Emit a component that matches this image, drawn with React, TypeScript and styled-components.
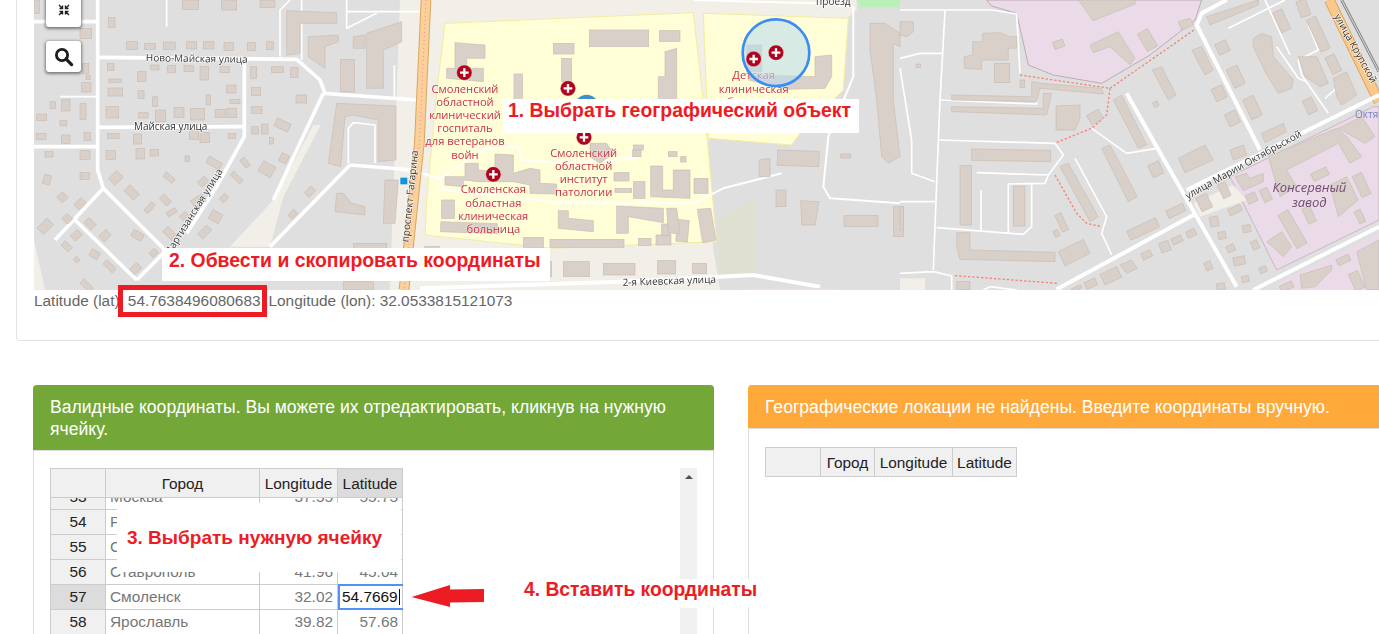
import React from "react";
import styled, { createGlobalStyle } from "styled-components";

type R = [number, number, number, number, number?];

const Global = createGlobalStyle`
  html, body { margin: 0; padding: 0; height: 100%; overflow: hidden; background: #fff; }
  body { font-family: "Liberation Sans", Arial, sans-serif; font-size: 15.4px; color: #555; }
`;

const Page = styled.div`
  position: relative;
  width: 1379px;
  height: 634px;
  overflow: hidden;
`;

const Well = styled.section`
  margin-left: 16px;
  width: 1500px;
  height: 341px;
  box-sizing: border-box;
  border-left: 1px solid #e3e3e3;
  border-bottom: 1px solid #e3e3e3;
  border-bottom-left-radius: 4px;
  padding-left: 17px;
`;

const MapFrame = styled.div`
  position: relative;
  width: 1345px;
  height: 290px;
  overflow: hidden;
  background: #e0dfdf;
`;

const MapSvg = styled.svg`
  display: block;
  width: 1345px;
  height: 290px;
  filter: blur(0.35px);
`;

const MapButton = styled.button<{ $top: number; $height: number }>`
  position: absolute;
  left: 12px;
  top: ${(p) => p.$top}px;
  width: 35px;
  height: ${(p) => p.$height}px;
  padding: 0;
  border: 0;
  border-radius: 3px;
  background: #fff;
  box-shadow: 0 1px 3px 1px rgba(0, 0, 0, 0.45);
  display: flex;
  align-items: center;
  justify-content: center;
`;

const CoordRow = styled.div`
  display: flex;
  height: 20px;
  margin-top: 1px;
  line-height: 20px;
  color: #666;
  font-size: 15.4px;
`;

const CoordValue = styled.span`
  position: relative;
  margin: 0 8px 0 4px;
  &::after {
    content: "";
    position: absolute;
    left: -10px;
    right: -6px;
    top: -6px;
    bottom: -6px;
    border: 5px solid #ed1c24;
  }
`;

const Panels = styled.div`
  display: flex;
  gap: 34px;
  margin: 44px 0 0 33px;
`;

const Panel = styled.section<{ $width: number }>`
  flex: none;
  width: ${(p) => p.$width}px;
  height: 400px;
  box-sizing: border-box;
  border: 1px solid #ddd;
  border-radius: 4px;
`;

const PanelHeading = styled.header<{ $color: string }>`
  margin: -1px -1px 0;
  padding: 11px 17px 10px;
  background: ${(p) => p.$color};
  color: #fff;
  font-size: 17.6px;
  line-height: 22px;
  border-radius: 4px 4px 0 0;
  border-bottom: 1px solid #ddd;
`;

const PanelBody = styled.div<{ $top: number }>`
  display: flex;
  justify-content: space-between;
  align-items: flex-start;
  padding: ${(p) => p.$top}px 16px 0;
`;

const Grid = styled.div<{ $cols: string }>`
  display: grid;
  grid-template-columns: ${(p) => p.$cols};
  border-left: 1px solid #ccc;
  border-top: 1px solid #ccc;
  box-sizing: border-box;
  font-size: 15.4px;
`;

const GridClip = styled.div`
  height: 200px;
  overflow: hidden;
`;

const HeadCell = styled.div<{ $active?: boolean }>`
  height: 28px;
  line-height: 29px;
  text-align: center;
  color: #222;
  white-space: nowrap;
  background: ${(p) => (p.$active ? "#dcdcdc" : "#f0f0f0")};
  border-right: 1px solid #ccc;
  border-bottom: 1px solid #ccc;
`;

const Rows = styled(Grid)`
  border-top: 0;
  margin-top: -13px;
`;

const RowHead = styled.div<{ $active?: boolean }>`
  height: 24px;
  line-height: 24px;
  text-align: center;
  color: #222;
  background: ${(p) => (p.$active ? "#dcdcdc" : "#f0f0f0")};
  border-right: 1px solid #ccc;
  border-bottom: 1px solid #ccc;
`;

const Cell = styled.div<{ $right?: boolean }>`
  height: 24px;
  line-height: 24px;
  padding: 0 4px;
  text-align: ${(p) => (p.$right ? "right" : "left")};
  color: #777;
  background: #fff;
  border-right: 1px solid #ccc;
  border-bottom: 1px solid #ccc;
  overflow: hidden;
  white-space: nowrap;
`;

const EditCell = styled(Cell)`
  position: relative;
  overflow: visible;
  color: #111;
  text-align: left;
  &::after {
    content: "";
    position: absolute;
    left: 0;
    top: -1px;
    right: -4px;
    bottom: -1px;
    border: 2px solid #5292f7;
  }
`;

const Caret = styled.span`
  display: inline-block;
  width: 1px;
  height: 16px;
  margin-left: 1px;
  background: #111;
  vertical-align: -3px;
`;

const ScrollTrack = styled.div`
  flex: none;
  width: 17px;
  height: 200px;
  background: #f1f1f1;
  display: flex;
  justify-content: center;
  padding-top: 7px;
  box-sizing: border-box;
`;

const ScrollArrow = styled.span`
  width: 0;
  height: 0;
  border-left: 4px solid transparent;
  border-right: 4px solid transparent;
  border-bottom: 4px solid #505050;
`;

const Note = styled.div<{ $x: number; $y: number; $w: number; $h: number; $pad: number; $line: number; $size: number }>`
  position: absolute;
  left: ${(p) => p.$x}px;
  top: ${(p) => p.$y}px;
  width: ${(p) => p.$w}px;
  height: ${(p) => p.$h}px;
  line-height: ${(p) => p.$line}px;
  padding-left: ${(p) => p.$pad}px;
  box-sizing: border-box;
  background: #fff;
  color: #ed1c24;
  font-size: ${(p) => p.$size}px;
  font-weight: 700;
  white-space: nowrap;
`;

const Arrow = styled.svg`
  position: absolute;
  left: 410px;
  top: 584px;
`;

const RedLabel = styled.text`
  font-family: "Open Sans", sans-serif;
  font-size: 33.5px;
  fill: #c9323d;
  text-anchor: middle;
  paint-order: stroke;
  stroke: rgba(255, 255, 255, 0.55);
  stroke-width: 3px;
`;

const StreetLabel = styled.text`
  font-family: "Open Sans", sans-serif;
  font-size: 30px;
  fill: #333;
  text-anchor: middle;
  paint-order: stroke;
  stroke: rgba(255, 255, 255, 0.8);
  stroke-width: 4px;
`;

const AreaLabel = styled.text`
  font-family: "Open Sans", sans-serif;
  font-size: 39px;
  font-style: italic;
  fill: #734a73;
  text-anchor: middle;
`;

const ReachLabel = styled.text`
  font-family: "Open Sans", sans-serif;
  font-size: 30px;
  fill: #6f7fc0;
`;

const BUILD = { fill: "#d9d0c9", stroke: "#c9bdb3", strokeWidth: 2 };

const rectsA: R[] = [
  [548,0,48,28],[665,0,45,30],[780,0,45,22],[102,0,16,40],[325,52,20,30],[380,125,32,24],[434,130,32,18],[490,126,36,22],[560,125,30,22],[610,125,32,22],[672,128,28,24],[742,128,24,24],[800,125,20,24],
  [322,190,20,22],[452,195,25,15],[502,197,25,20],[552,197,28,18],[600,200,26,40],[660,200,28,18],[752,200,18,35],[815,200,35,18],[872,203,22,30],
  [326,237,38,10],[324,264,44,24],[412,215,26,30],[414,272,18,24],[458,290,14,30],[618,285,14,30],[690,298,30,12],[680,255,28,24],[754,262,28,24],[754,320,32,20],[888,285,32,24],
  [318,320,38,34],[416,338,28,16],[466,330,30,35],[522,322,30,30],[572,325,42,35],[645,328,30,25],[680,325,30,28],
  [322,400,35,16],[400,402,25,30],[568,392,28,26],[600,398,28,30],[685,400,22,15],[755,380,20,22],[784,372,20,30],[808,412,12,20],[825,362,45,26,25],
  [318,452,28,26],[408,445,26,32],[450,448,26,20],[555,468,14,16],[240,452,30,26],[135,455,24,16],[240,518,28,20],
  [240,85,35,30],[248,190,18,30],[258,225,12,14],[245,248,28,28],[150,305,16,20],[185,298,25,35],[240,310,18,48],[110,342,30,20],[180,362,20,16],[108,400,30,18],[185,405,25,25],[252,398,20,24],
  [330,520,35,28,-45],[375,565,40,25,45],[490,525,35,16,40],[595,535,28,20,-45],[620,478,45,22,30],[720,480,30,16,50],[780,490,42,35,30],[690,525,40,15,45],[840,462,24,26,25],[916,565,28,20,-45],[866,634,25,18,-45],
  [130,525,22,28,15],[175,580,24,24,45],[225,600,30,22,-45],[190,645,24,22,45],[115,665,42,28,-45],[255,660,30,22,45],[300,695,30,24,-45],[395,695,35,22,30],[215,695,28,22,-45],[185,730,30,18,45],[270,752,28,22,30],[310,790,38,18,45],[222,772,16,14,45],[392,795,30,22,-45],[240,848,40,18,45],[480,590,32,20,45],[432,615,34,16,-50],[500,630,30,14,-30],[540,640,24,16,-45],[490,690,40,22,45],[595,685,38,22,-45],[630,635,34,30,30],[660,585,24,18,-45],[575,590,40,25,-30],[450,750,22,18,-45],
  [1022,178,42,98],[1322,600,40,55],[1322,665,60,35],[1338,530,45,30],[1060,730,100,40],[1030,845,90,25],
];

const polysA = [
  "860,32 1010,38 1010,70 900,70 900,160 860,165",
  "925,110 1015,105 1015,125 975,140 975,205 925,170",
  "1100,100 1205,65 1205,125 1150,150 1150,265 1100,265",
  "1060,110 1095,105 1095,145 1060,145",
  "1155,540 1195,540 1185,670 1150,670",
  "1010,310 1188,318 1188,480 1135,485 1135,360 1058,345 1035,350 1022,500 985,490",
  "1010,580 1030,580 1055,610 1095,620 1095,645 1005,635",
];

const rectsB: R[] = [
  [400,130,62,32],[425,175,30,70],[508,90,178,50],[718,92,62,32],[282,222,25,100],
  [640,435,30,15],[745,455,26,15],[782,470,16,16],[638,450,25,20],
  [65,600,38,55],[62,668,170,30,2],[310,712,60,30],[390,718,222,24],[655,715,38,22],[708,705,45,30],
  [725,672,25,35],[770,660,35,65,5],[582,518,45,25],[585,565,50,12],[640,545,35,50],[822,535,42,45],
  [1072,452,125,46,2],[1262,462,30,12],[1068,570,30,50],[1272,647,102,32],[1420,620,30,90],
  [430,785,78,45],[550,790,95,35],[712,782,55,40],[818,790,42,30],[370,785,25,45],[14,740,45,12],
];

const polysB = [
  "105,128 195,135 195,175 140,175 140,205 190,205 190,245 80,235 80,205 105,205",
  "735,155 770,145 770,300 715,300 715,230 735,230",
  "135,490 175,490 175,510 225,515 225,462 280,465 280,520 330,505 360,510 360,550 410,552 410,582 330,580 330,555 280,545 175,545 130,540 130,560 75,555 75,530 135,530",
  "510,430 560,430 580,460 540,490 510,470",
  "415,632 445,632 445,655 520,662 520,695 415,685",
  "590,618 730,625 730,668 625,650 625,700 590,700",
  "740,625 770,625 780,700 745,700",
  "832,628 872,625 888,720 848,728",
  "692,498 728,498 728,570 760,570 760,510 810,510 810,595 692,590",
  "1018,480 1050,475 1050,530 1018,530",
  "1142,602 1197,605 1185,675 1145,675",
  "1185,170 1235,165 1235,230 1215,265 1100,268 985,240 985,225 1185,230",
  "980,135 1025,135 1025,215 980,215",
  "1350,70 1395,70 1440,100 1440,140 1420,130 1420,300 1440,470 1405,490 1385,470 1370,300 1350,150",
];

const rectsC: R[] = [
  [460,122,32,22,-20],[725,90,35,60,-30],[48,192,14,10],[283,190,46,58],[360,240,14,22],[565,335,40,32,-30],
  [950,125,35,35,-25],[760,305,15,15,-30],[990,200,35,60,-25],[940,260,35,40,-25],[980,335,35,40,-25],[1040,290,35,65,-25],
  [1130,30,30,65,-25],[1195,0,30,50,-20],[1240,50,30,105,-25],[1285,165,30,55,-25],[1215,295,30,45,-25],
  [750,488,35,40,-25],[800,620,55,25,-25],[682,672,95,30,-25],[475,640,20,55,-25],[462,690,15,20,-25],
  [215,449,237,34,1],[180,497,35,178],[340,558,35,120],[170,845,40,25],[0,620,10,70],
  [725,755,30,20,-25],[780,725,30,30,-20],[815,710,32,20,-25],[860,690,28,20,-25],[605,810,55,35,-25],[555,840,35,22,-25],[515,860,30,10,-25],
  [895,585,35,45,-25],[960,548,25,45,-25],[1040,580,30,28,-25],[1085,565,25,40,-25],[985,620,40,20,-25],[930,650,25,30,-10],[1028,675,24,22,-10],[955,695,22,22,-10],[980,735,24,20,-25],[1055,722,20,26,-25],[1000,770,35,25,-10],[915,785,20,25,-25],[1078,800,22,18,-25],[1025,828,22,18,-10],[950,850,25,20,-10],
  [1235,510,50,25,-25],[1370,520,30,70,-25],[1160,630,35,115,-30],[1215,620,25,50,-25],[1370,630,20,40,-25],[1310,770,40,20,-25],[1355,815,30,55,-25],[1140,850,40,20,-25],
];

const polysC = [
  "535,0 705,0 705,12 580,62",
  "570,135 655,95 705,175 690,195 630,140 580,158",
  "835,65 870,55 880,75 845,90",
  "920,50 1075,0 1075,15 930,75",
  "0,65 40,65 40,95 20,110 0,105",
  "218,125 248,125 248,100 300,98 330,110 350,110 350,145 325,145 325,180 245,180 245,208 193,205 193,170 218,165",
  "155,285 395,290 395,245 425,250 605,265 610,282 420,265 410,305 155,300",
  "155,320 430,325 430,280 455,280 440,345 155,335",
  "468,318 540,315 540,355 525,390 468,390",
  "640,300 665,285 740,435 715,445",
  "757,210 785,200 828,285 805,300",
  "875,150 905,140 940,210 915,225",
  "1085,400 1150,370 1160,395 1095,428",
  "990,450 1030,435 1040,465 1000,480",
  "835,475 915,435 940,480 855,518",
  "1060,115 1085,100 1115,110 1120,170 1180,240 1175,265 1135,280 1095,215 1060,140",
  "1195,170 1250,170 1285,250 1260,260 1215,230",
  "1300,235 1340,215 1370,285 1325,315 1310,290",
  "480,500 505,490 595,650 570,665",
  "605,445 630,435 712,590 685,605",
  "475,755 550,718 570,760 495,798",
  "170,698 210,698 210,750 465,757 465,785 180,778 170,740",
  "660,795 695,780 712,805 680,820",
  "1005,530 1040,520 1050,535 1090,520 1090,545 1030,572",
  "1105,470 1310,385 1340,410 1385,470 1350,490 1315,430 1160,510 1190,560 1140,590",
  "1315,385 1385,350 1425,410 1395,430",
  "1290,555 1340,530 1375,600 1315,650",
  "1100,725 1145,695 1175,740 1150,770",
  "1200,825 1295,795 1295,810 1245,860 1205,865",
  "1370,755 1437,720 1437,870 1400,870",
];

const thinA = [
  "180,290 293,290","840,170 840,30 870,0","905,0 905,180","1040,0 1040,85 1130,40","1040,35 1265,35",
  "1045,490 1045,385 1060,368 1125,375 1125,490","1183,195 1183,295","500,0 500,80","1200,510 1330,530","1320,530 1340,570 1380,590",
];
const wideA = [
  "293,0 293,510 310,565 490,745","102,65 293,65","293,172 890,178 960,240 975,280 1250,300","293,382 730,380",
  "733,190 733,410 650,560 560,700","102,440 293,440","310,565 165,720","225,660 410,840","490,760 410,840",
  "970,280 820,600","1050,495 810,740","1050,495 1240,510",
];

const thinB = [
  "0,520 60,535 70,570 320,595 420,610 820,610 910,565 1085,520",
  "60,535 130,490 200,445 295,440 305,480 420,490 650,475",
  "1300,20 1300,230 1225,410 1210,560 1230,595 1440,610",
  "820,0 1190,10 1300,20",
];

const thinC = [
  "0,30 275,30 350,42 360,220","135,32 120,300 115,420 100,810","120,300 410,312 410,250","115,420 465,430 490,465 445,525 435,550 325,552 325,700",
  "230,518 445,525","395,552 395,680 370,703 110,683","243,570 243,695","0,175 60,160 130,160","0,205 35,420 35,520 105,545","0,605 105,605",
  "0,820 100,815 155,828 155,870","575,385 680,460 770,445","525,475 620,650 605,700 635,765","985,85 1155,0","1095,0 1170,165",
  "1130,140 1195,235 1220,245","1225,75 1255,150 1195,180 1205,225 1285,340","1305,240 1310,265 1275,295","250,870 270,860 350,870",
];
const wideC = [
  "470,868 890,640","860,570 1437,285","1060,870 1437,680","980,0 905,40 890,75 1080,450","680,280 770,440 1010,860",
];

const dashC = [
  "360,225 630,265 885,88","630,265 620,345 575,385 468,428","465,525 530,640 560,670 605,680","165,827 475,850",
];

const Buildings = ({ rects, polys }: { rects: R[]; polys: string[] }) => (
  <g {...BUILD}>
    {rects.map(([x, y, w, h, a], i) => (
      <rect key={i} x={x} y={y} width={w} height={h} transform={a ? `rotate(${a} ${x + w / 2} ${y + h / 2})` : undefined} />
    ))}
    {polys.map((p, i) => (
      <polygon key={i} points={p} />
    ))}
  </g>
);

const Lines = ({ items, width, color = "#fff", dash }: { items: string[]; width: number; color?: string; dash?: string }) => (
  <g fill="none" stroke={color} strokeWidth={width} strokeLinejoin="round" strokeDasharray={dash}>
    {items.map((p, i) => (
      <polyline key={i} points={p} />
    ))}
  </g>
);

const Cross = ({ x, y }: { x: number; y: number }) => (
  <g transform={`translate(${x} ${y})`}>
    <circle r="23" fill="#b0041c" stroke="#fff" strokeOpacity="0.5" strokeWidth="2" />
    <path d="M-13 0H13M0 -13V13" stroke="#fff" strokeWidth="7" />
  </g>
);

const Stacked = ({ x, y, lines }: { x: number; y: number; lines: string[] }) => (
  <>
    {lines.map((l, i) => (
      <RedLabel key={l + i} x={x} y={y + i * 39.5}>
        {l}
      </RedLabel>
    ))}
  </>
);

const CityMap = () => (
  <MapSvg viewBox="102 0 4035 870" preserveAspectRatio="none">
    <rect x="102" y="0" width="4035" height="870" fill="#e0dfdf" />
    <polygon points="102,720 135,869 102,869" fill="#f2efe9" />
    <polygon points="940,375 962,375 850,590 810,740 690,740 820,600" fill="#f2efe9" />
    <polygon points="1200,0 2570,0 2570,30 2125,420 2140,750 2160,870 1170,870" fill="#f2efe9" />
    <g>
      <Lines items={wideA} width={11} />
      <Lines items={thinA} width={5} />
      <Buildings rects={rectsA} polys={polysA} />
    </g>
    <g transform="translate(1260 0)">
      <polygon points="1310,0 1440,0 1440,22 1320,22" fill="#b8f0b8" />
      <polygon points="75,70 820,38 860,400 890,725 395,745 15,705 20,600 50,280" fill="#fffed6" stroke="#f3eca0" strokeWidth="3" />
      <polygon points="850,40 1285,55 1270,270 1140,400 1115,435 865,415" fill="#fffed6" stroke="#f3eca0" strokeWidth="3" />
      <polygon points="895,660 1005,590 1005,822 895,820" fill="#dfe0cf" />
      <polyline points="0,865 600,845 1000,825 1200,860" fill="none" stroke="#fff" strokeWidth="12" />
      <rect x="960" y="865" width="300" height="6" fill="#ebdbe8" />
      <Lines items={thinB} width={6} />
      <Buildings rects={rectsB} polys={polysB} />
      <circle cx="500" cy="320" r="36" fill="#3d8fce" />
      <Stacked x={135} y={278} lines={["Смоленский", "областной", "клинический", "госпиталь", "для ветеранов", "войн"]} />
      <Stacked x={491} y={470} lines={["Смоленский", "областной", "институт", "патологии"]} />
      <Stacked x={220} y={580} lines={["Смоленская", "областная", "клиническая", "больница"]} />
      <Stacked x={1001} y={238} lines={["Детская", "клиническая", "больница"]} />
      <circle cx="1068" cy="158" r="100" fill="#bcdcec" fillOpacity="0.6" stroke="#3b8cf5" strokeWidth="8" />
      <Cross x={133} y={218} />
      <Cross x={444} y={265} />
      <Cross x={492} y={412} />
      <Cross x={220} y={523} />
      <Cross x={1001} y={177} />
      <Cross x={1068} y={158} />
      <StreetLabel x={748} y={853} transform="rotate(-2 748 853)">2-я Киевская улица</StreetLabel>
      <StreetLabel x={1240} y={16}>проезд</StreetLabel>
    </g>
    <g transform="translate(2700 0)">
      <rect x="0" y="835" width="75" height="35" fill="#f2efe9" />
      <polygon points="260,0 905,0 885,60 750,165 605,250 460,225 385,195 375,150 350,40 275,18" fill="#ebdbe8" stroke="#a8919f" strokeWidth="2" />
      <polygon points="990,530 1420,320 1437,320 1437,660 1130,810" fill="#ebdbe8" stroke="#b9a4b3" strokeWidth="2" />
      <polygon points="1130,850 1437,700 1437,870 1140,870" fill="#ebdbe8" />
      <polygon points="880,610 1000,555 1040,600 900,650" fill="#f2efe9" />
      <polyline points="1325,0 1437,215" fill="none" stroke="#888" strokeWidth="9" />
      <polyline points="1325,0 1437,215" fill="none" stroke="#ddd" strokeWidth="3" />
      <polyline points="1288,0 1437,305" fill="none" stroke="#d9a75f" strokeWidth="32" />
      <polyline points="1288,0 1437,305" fill="none" stroke="#fbc889" strokeWidth="26" />
      <Lines items={wideC} width={12} />
      <Lines items={thinC} width={5} />
      <Lines items={dashC} width={4} color="#fa8072" dash="7 6" />
      <Buildings rects={rectsC} polys={polysC} />
      <StreetLabel x={1035} y={503} transform="rotate(-29 1035 503)">улица Марии Октябрьской</StreetLabel>
      <StreetLabel x={1358} y={150} transform="rotate(61 1358 150)">улица Крупской</StreetLabel>
      <AreaLabel x={1228} y={577}>Консервный</AreaLabel>
      <AreaLabel x={1228} y={622}>завод</AreaLabel>
      <ReachLabel x={1365} y={355}>Октя</ReachLabel>
    </g>
    <polyline points="1278,0 1258,430 1212,869" fill="none" stroke="#d9a75f" strokeWidth="32" />
    <polyline points="1278,0 1258,430 1212,869" fill="none" stroke="#fbd09a" strokeWidth="26" />
    <polyline points="1278,0 1258,430 1212,869" fill="none" stroke="#f08f80" strokeWidth="3" strokeDasharray="3 9" />
    <StreetLabel x={1240} y={590} transform="rotate(-84 1240 590)">проспект Гагарина</StreetLabel>
    <rect x="1201" y="533" width="21" height="20" fill="#0f94d8" />
    <StreetLabel x={590} y={186} transform="rotate(1 590 186)">Ново-Майская улица</StreetLabel>
    <StreetLabel x={512} y={390}>Майская улица</StreetLabel>
    <StreetLabel x={590} y={640} transform="rotate(-58 590 640)">Партизанская улица</StreetLabel>
  </MapSvg>
);

const cityRows: [number, string, string, string][] = [
  [53, "Москва", "37.55", "55.75"],
  [54, "Ростов", "39.70", "47.24"],
  [55, "Самара", "50.15", "53.20"],
  [56, "Ставрополь", "41.96", "45.04"],
  [57, "Смоленск", "32.02", ""],
  [58, "Ярославль", "39.82", "57.68"],
  [59, "Тула", "37.61", "54.19"],
];

const LEFT_COLS = "55px 154px 78px 65px";

export default function App() {
  return (
    <Page>
      <Global />
      <Well>
        <MapFrame>
          <CityMap />
          <MapButton $top={-8} $height={35}>
            <svg width="12" height="12" viewBox="0 0 12 12" fill="none" stroke="#222" strokeWidth="1.4">
              <path d="M1 1L4.5 4.5M4.5 1.5V4.5H1.5M11 1L7.5 4.5M7.5 1.5V4.5H10.5M1 11L4.5 7.5M4.5 10.5V7.5H1.5M11 11L7.5 7.5M7.5 10.5V7.5H10.5" />
            </svg>
          </MapButton>
          <MapButton $top={41} $height={31}>
            <svg width="20" height="20" viewBox="0 0 20 20" fill="none" stroke="#1c1c1c">
              <circle cx="8" cy="8" r="5.6" strokeWidth="2.8" />
              <path d="M12.2 12.2L17.6 17.6" strokeWidth="3.2" strokeLinecap="round" />
            </svg>
          </MapButton>
        </MapFrame>
        <CoordRow>
          <span>Latitude (lat):</span>
          <CoordValue>54.7638496080683</CoordValue>
          <span>Longitude (lon): 32.0533815121073</span>
        </CoordRow>
      </Well>
      <Panels>
        <Panel $width={681}>
          <PanelHeading $color="#73a839">
            Валидные координаты. Вы можете их отредактировать, кликнув на нужную ячейку.
          </PanelHeading>
          <PanelBody $top={17}>
            <div>
              <Grid $cols={LEFT_COLS}>
                <HeadCell />
                <HeadCell>Город</HeadCell>
                <HeadCell>Longitude</HeadCell>
                <HeadCell $active>Latitude</HeadCell>
              </Grid>
              <GridClip>
                <Rows $cols={LEFT_COLS}>
                  {cityRows.map(([n, city, lon, lat]) => (
                    <React.Fragment key={n}>
                      <RowHead $active={n === 57}>{n}</RowHead>
                      <Cell>{city}</Cell>
                      <Cell $right>{lon}</Cell>
                      {n === 57 ? (
                        <EditCell>
                          54.7669
                          <Caret />
                        </EditCell>
                      ) : (
                        <Cell $right>{lat}</Cell>
                      )}
                    </React.Fragment>
                  ))}
                </Rows>
              </GridClip>
            </div>
            <ScrollTrack>
              <ScrollArrow />
            </ScrollTrack>
          </PanelBody>
        </Panel>
        <Panel $width={700}>
          <PanelHeading $color="#ffa93b">Географические локации не найдены. Введите координаты вручную.</PanelHeading>
          <PanelBody $top={18}>
            <Grid $cols="55px 54px 78px 64px">
              <HeadCell />
              <HeadCell>Город</HeadCell>
              <HeadCell>Longitude</HeadCell>
              <HeadCell>Latitude</HeadCell>
            </Grid>
          </PanelBody>
        </Panel>
      </Panels>
      <Note $x={503} $y={99} $w={356} $h={34} $pad={5} $line={22} $size={19.4}>1. Выбрать географический объект</Note>
      <Note $x={162} $y={248} $w={388} $h={33} $pad={7} $line={24} $size={19.4}>2. Обвести и скопировать координаты</Note>
      <Note $x={117} $y={503} $w={284} $h={69} $pad={10} $line={69} $size={19}>3. Выбрать нужную ячейку</Note>
      <Note $x={519} $y={579} $w={231} $h={29} $pad={5} $line={22} $size={19.3}>4. Вставить координаты</Note>
      <Arrow width="76" height="26" viewBox="0 0 76 26">
        <path d="M1.5 13L40 1V5.5L74 5V18L40 18.5V23Z" fill="#ed1c24" />
      </Arrow>
    </Page>
  );
}
